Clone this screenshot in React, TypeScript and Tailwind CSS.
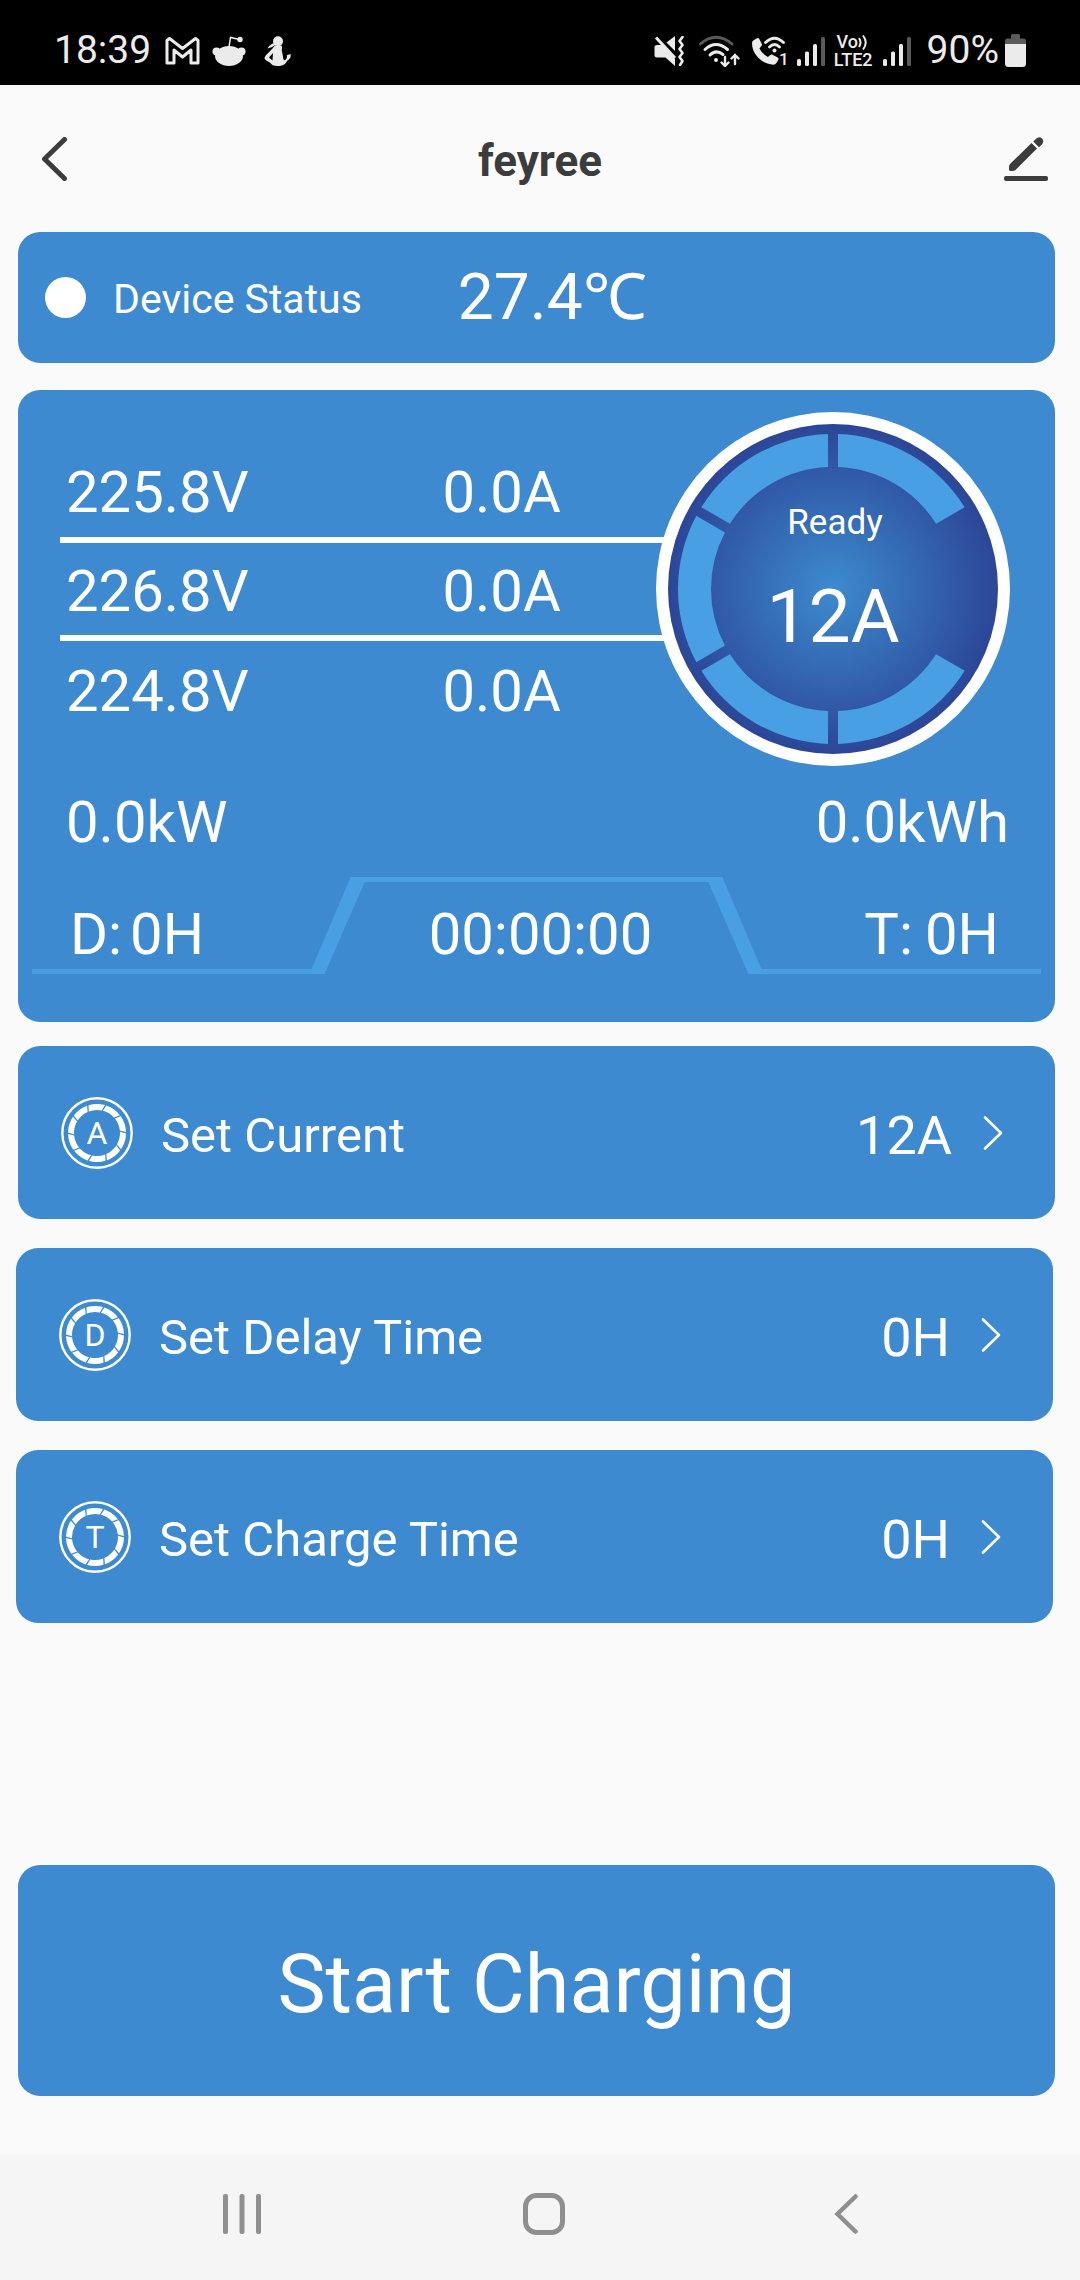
import { useState } from "react";

interface Phase {
  voltage: string;
  current: string;
}

interface Setting {
  letter: string;
  label: string;
  value: string;
}

const phases: Phase[] = [
  { voltage: "225.8V", current: "0.0A" },
  { voltage: "226.8V", current: "0.0A" },
  { voltage: "224.8V", current: "0.0A" },
];

const currentSetting: Setting = { letter: "A", label: "Set Current", value: "12A" };

const timeSettings: Setting[] = [
  { letter: "D", label: "Set Delay Time", value: "0H" },
  { letter: "T", label: "Set Charge Time", value: "0H" },
];

// point on a circle, 0deg is to the right and angles go clockwise
const point = (c: number, r: number, deg: number) => {
  const a = (deg * Math.PI) / 180;
  return `${(c + r * Math.cos(a)).toFixed(2)} ${(c + r * Math.sin(a)).toFixed(2)}`;
};

// dial segment whose sides stay parallel to the gap next to it
const dialSegment = (from: number, to: number) => {
  const outer = 155;
  const inner = 122;
  const gap = 5;
  const o = (Math.asin(gap / outer) * 180) / Math.PI;
  const i = (Math.asin(gap / inner) * 180) / Math.PI;
  return `M${point(178, outer, from + o)} A${outer} ${outer} 0 0 1 ${point(178, outer, to - o)} L${point(178, inner, to - i)} A${inner} ${inner} 0 0 0 ${point(178, inner, from + i)} Z`;
};

// slanted dash of the small setting badge
const badgeDash = (start: number) =>
  `M${point(36, 29, start + 2)} A29 29 0 0 1 ${point(36, 29, start + 35)} L${point(36, 23, start + 31)} A23 23 0 0 0 ${point(36, 23, start - 2)} Z`;

const Signal = () => (
  <svg className="h-8 w-7" viewBox="0 0 28 32" aria-hidden="true">
    <g fill="#ebebeb">
      <rect x="0" y="24" width="4" height="7" rx="1.5" />
      <rect x="8" y="16.5" width="4" height="14.5" rx="1.5" />
      <rect x="16" y="9" width="4" height="22" rx="1.5" />
    </g>
    <rect x="24" y="2" width="4" height="29" rx="1.5" fill="#5a5a5a" />
  </svg>
);

const StatusBar = () => (
  <div className="flex h-[85px] items-center justify-between bg-black pt-4 pr-[54px] pl-[54px] text-[39px] leading-none text-[#ebebeb]">
    <div className="flex items-center">
      <span>18:39</span>
      <svg className="ml-3.5 h-[30px] w-[35px]" viewBox="0 0 35 30" aria-hidden="true">
        <path
          d="M2 27V4.500L4.500 2.500 17.500 12.500 30.500 2.500 33 4.500V27H26V14L17.500 21 9 14V27Z"
          fill="none"
          stroke="#ebebeb"
          strokeWidth="3"
          strokeLinejoin="round"
        />
      </svg>
      <svg className="ml-3 h-[30px] w-[34px]" viewBox="0 0 34 30" aria-hidden="true">
        <g fill="#ebebeb">
          <ellipse cx="17" cy="20" rx="14" ry="10" />
          <circle cx="4.500" cy="15.500" r="4" />
          <circle cx="29.500" cy="15.500" r="4" />
          <circle cx="28" cy="3.500" r="2.700" />
        </g>
        <path d="M17 11l1.500-9.500 8 1.800" fill="none" stroke="#ebebeb" strokeWidth="1.500" />
      </svg>
      <svg className="ml-[18px] h-[30px] w-[27px]" viewBox="0 0 27 30" aria-hidden="true">
        <g fill="#ebebeb">
          <circle cx="14" cy="5.200" r="5" />
          <path d="M11 7C8 7.500 5 9 3.500 12.500 7 11.500 9.500 10.500 12 8.500z" />
          <path
            fillRule="evenodd"
            d="M11 9.500h6.500c1 1.500.3 2.500.3 4.500.2 2.500 1 4 1.200 7 .3 2 .6 3.200 1.500 3.200 1.800-.6 2.800-2.500 2.300-5l3.700-1.200c.7 3-.5 5.500-3.500 7-1 3-4.500 5-9.500 5-4 0-6-1-7.500-3.500C3.500 25.500.5 23.500.5 22c0-2 5-6 8-9.500zM5 21.500l3.500 3 .5-7.500z"
          />
        </g>
      </svg>
    </div>
    <div className="flex items-center">
      <svg className="h-[30px] w-[31px]" viewBox="0 0 31 30" aria-hidden="true">
        <g fill="#ebebeb">
          <path d="M3 9h5l13 14v7l-9.500-8.500H3A2.500 2.500 0 0 1 .5 19v-7.500A2.500 2.500 0 0 1 3 9z" />
          <path d="M21 0v15L12.500 6.500z" />
        </g>
        <path d="M7 3L21 18" stroke="#000" strokeWidth="2.500" />
        <path d="M2 1.500L21 22" stroke="#ebebeb" strokeWidth="3" />
        <path
          d="M28.500 1l-3 4 3 4-3 4 3 4-3 4 3 4-2.500 4"
          fill="none"
          stroke="#ebebeb"
          strokeWidth="2.600"
          strokeLinejoin="round"
          strokeLinecap="round"
        />
      </svg>
      <svg className="ml-3.5 h-8 w-[42px]" viewBox="0 0 42 32" fill="none" strokeLinecap="round" aria-hidden="true">
        <path d="M1.500 9Q17 -4.500 33 9" stroke="#5a5a5a" strokeWidth="2.800" />
        <g stroke="#ebebeb">
          <path d="M6 14.500Q17 4.500 28.500 14.500M11 20Q17 14 24 19.500" strokeWidth="3" />
          <path d="M26 22v9M22.500 27.500l3.500 3.500 3.500-3.500M36 29V20M32.500 23.500L36 20l3.500 3.500" strokeWidth="2.400" />
        </g>
        <circle cx="17" cy="25" r="2" fill="#ebebeb" />
      </svg>
      <svg className="ml-2.5 h-9 w-10" viewBox="0 -2 40 36" fill="none" aria-hidden="true">
        <path
          d="M1 8Q1 6 3 5L6 3.200q1.500-.7 2.300.7l2.500 5q.5 1.200-.4 2.200l-2 2.400q3 5.500 8.500 8.500l2.400-2q1-.8 2.200-.3l5.200 2.700q1.300.9.700 2.300l-2 3.300q-1 1.800-3 1.800Q14 29.500 7 22.500 1 16 1 8z"
          fill="#ebebeb"
        />
        <g stroke="#ebebeb" strokeWidth="2.800" strokeLinecap="round">
          <path d="M14.500 7.500Q23.500-1 32.500 7.500M18.500 12Q23.500 7 28.500 12" />
        </g>
        <circle cx="23.500" cy="15.500" r="2" fill="#ebebeb" />
        <text x="28" y="30" fontSize="17" fontWeight="500" fill="#ebebeb">
          1
        </text>
      </svg>
      <div className="ml-1.5">
        <Signal />
      </div>
      <div className="ml-[9px] flex flex-col text-lg leading-[18px] font-medium">
        <span className="flex items-center justify-center">
          Vo
          <svg className="h-4 w-3" viewBox="0 0 12 16" fill="none" stroke="#ebebeb" strokeWidth="2" aria-hidden="true">
            <path d="M1 4Q4 8.500 1 13M5 1.500Q10.500 8.500 5 15.500" />
          </svg>
        </span>
        <span>LTE2</span>
      </div>
      <div className="ml-2.5">
        <Signal />
      </div>
      <span className="ml-4">90%</span>
      <svg className="ml-1.5 h-[33px] w-[21px]" viewBox="0 0 21 33" aria-hidden="true">
        <path d="M6 1.500Q6 0 7.500 0h6Q15 0 15 1.500V4.500h3.500Q21 4.500 21 7v3H0V7q0-2.500 2.500-2.500H6z" fill="#5a5a5a" />
        <path d="M0 10h21v19.500q0 3.500-3.500 3.500h-14Q0 33 0 29.500z" fill="#ebebeb" />
      </svg>
    </div>
  </div>
);

const Header = () => (
  <header className="grid h-[147px] grid-cols-[1fr_auto_1fr] items-center px-8 text-[#3c3c3c]">
    <button aria-label="Back" className="justify-self-start pl-2">
      <svg className="h-11 w-7" viewBox="0 0 28 44" fill="none" stroke="currentColor" strokeWidth="5">
        <path d="M24.500 2.500L4.500 22l20 19.500" strokeLinecap="round" strokeLinejoin="round" />
      </svg>
    </button>
    <h1 className="pt-1 text-[44px] font-bold">feyree</h1>
    <button aria-label="Edit" className="justify-self-end">
      <svg className="size-11" viewBox="0 0 44 44" fill="currentColor">
        <path d="M27.500 6L33 11.500 12 32.500Q10.500 34 8.500 34H6.500Q5 34 5 32.500V29.500Q5 28 6.500 26.500z" />
        <path d="M29.300 4.500L32 1.700Q35-1.200 38 1.500 40.500 4.500 37.800 7.500L35 10.200z" />
        <rect x="0" y="39" width="44" height="5" rx="2" />
      </svg>
    </button>
  </header>
);

const Dial = () => (
  <div className="relative -ml-3 flex size-[356px] shrink-0 flex-col items-center pt-[92px]">
    <svg className="absolute inset-0 size-full" viewBox="0 0 356 356" aria-hidden="true">
      <defs>
        <radialGradient id="dial">
          <stop offset="0" stopColor="#3d8bcf" />
          <stop offset="1" stopColor="#2c4697" />
        </radialGradient>
      </defs>
      <circle cx="178" cy="178" r="177" fill="#fff" />
      <circle cx="178" cy="178" r="165" fill="url(#dial)" />
      {[30, 90, 150, 210, 270].map((start) => (
        <path key={start} d={dialSegment(start, start + 60)} fill="#489fe4" />
      ))}
    </svg>
    <span className="relative pl-1 text-[35px] leading-10">Ready</span>
    <span className="relative mt-7 text-[75px] leading-[90px]">12A</span>
  </div>
);

const SettingRow = ({ setting }: { setting: Setting }) => (
  <button className="flex h-[173px] w-full items-center rounded-[22px] bg-[#3e8ad0] pr-[52px] pl-[43px] text-left text-white">
    <svg className="size-[72px] shrink-0" viewBox="0 0 72 72" aria-hidden="true">
      <circle cx="36" cy="36" r="34.700" fill="none" stroke="#fff" strokeWidth="2.400" />
      {[0, 1, 2, 3, 4, 5, 6, 7, 8, 9].map((i) => (
        <path key={i} d={badgeDash(i * 36 - 109)} fill="#fff" />
      ))}
      <text x="36" y="47" textAnchor="middle" fontSize="32" fill="#fff">
        {setting.letter}
      </text>
    </svg>
    <span className="ml-7 pt-1.5 text-[49px]">{setting.label}</span>
    <span className="ml-auto pt-1.5 text-[54px] leading-none">{setting.value}</span>
    <svg className="ml-[31px] h-9 w-5 shrink-0" viewBox="0 0 20 36" fill="none" aria-hidden="true">
      <path d="M2 2.500L18 18 2 33.500" stroke="#fff" strokeWidth="2.600" strokeLinecap="round" strokeLinejoin="round" />
    </svg>
  </button>
);

const NavBar = () => (
  <nav className="grid h-[126px] grid-cols-3 items-center justify-items-center bg-[#f5f5f5] pr-[83px] pb-1.5 pl-[91px] text-[#8f8f8f]">
    <button aria-label="Recents">
      <svg className="h-10 w-[38px]" viewBox="0 0 38 40" fill="currentColor">
        <rect x="0" y="0" width="5" height="40" rx="2" />
        <rect x="16.500" y="0" width="5" height="40" rx="2" />
        <rect x="33" y="0" width="5" height="40" rx="2" />
      </svg>
    </button>
    <button aria-label="Home">
      <svg className="size-[42px]" viewBox="0 0 42 42" fill="none" stroke="currentColor" strokeWidth="5">
        <rect x="2.500" y="2.500" width="37" height="37" rx="11" />
      </svg>
    </button>
    <button aria-label="Back">
      <svg className="h-10 w-6" viewBox="0 0 24 40" fill="none" stroke="currentColor" strokeWidth="4.500">
        <path d="M21.500 2.500L3.500 20l18 17.500" strokeLinecap="round" />
      </svg>
    </button>
  </nav>
);

const App = () => {
  const [charging, setCharging] = useState(false);

  return (
    <div className="flex min-h-screen flex-col bg-[#fafafa] font-['Roboto',sans-serif]">
      <StatusBar />
      <Header />

      {/* Device status */}
      <section className="mr-[25px] ml-[18px] flex h-[131px] items-center rounded-[22px] bg-[#3e8ad0] pl-[27px] text-white">
        <span className="size-[41px] rounded-full bg-white" />
        <span className="ml-[27px] pt-1 text-[41px] leading-none">Device Status</span>
        <span className="ml-24 text-[64px] leading-none">27.4℃</span>
      </section>

      {/* Readings */}
      <section className="mt-[27px] mr-[25px] ml-[18px] rounded-[22px] bg-[#3e8ad0] pt-[21px] pb-12 text-[58px] text-white">
        <div className="flex items-center pr-11 pl-[42px]">
          <table className="flex-1 border-collapse leading-none">
            <tbody className="divide-y-6 divide-white">
              {phases.map((phase) => (
                <tr key={phase.voltage} className="h-[98px]">
                  <td className="w-[63%] p-0 pt-1 pl-1.5">{phase.voltage}</td>
                  <td className="p-0 pt-1">{phase.current}</td>
                </tr>
              ))}
            </tbody>
          </table>
          <Dial />
        </div>
        <div className="mt-5 flex justify-between pr-[46px] pl-12 leading-[70px]">
          <span>0.0kW</span>
          <span>0.0kWh</span>
        </div>
        <div className="relative mx-3.5 mt-5 grid h-[97px] grid-cols-3 items-center pt-4 leading-[70px]">
          <svg className="absolute inset-0 size-full" viewBox="0 0 1007 97" preserveAspectRatio="none" aria-hidden="true">
            <path
              d="M0 92H279L318 0H689L728 92H1007V97H715L675 5H332L292 97H0z"
              fill="#489fe4"
            />
          </svg>
          <span className="relative flex gap-2 pl-[38px]">
            <span>D:</span>
            <span>0H</span>
          </span>
          <span className="relative pl-2 text-center">00:00:00</span>
          <span className="relative flex justify-end gap-3 pr-[42px]">
            <span>T:</span>
            <span>0H</span>
          </span>
        </div>
      </section>

      {/* Settings */}
      <div className="mt-6 mr-[25px] ml-[18px]">
        <SettingRow setting={currentSetting} />
      </div>
      <div className="mt-[29px] mr-[27px] ml-4 flex flex-col gap-[29px]">
        {timeSettings.map((setting) => (
          <SettingRow key={setting.label} setting={setting} />
        ))}
      </div>

      <button
        onClick={() => setCharging(!charging)}
        className="mt-auto mr-[25px] mb-[58px] ml-[18px] h-[231px] rounded-[22px] bg-[#3e8ad0] pt-2 text-[81px] text-white"
      >
        {charging ? "Stop Charging" : "Start Charging"}
      </button>

      <NavBar />
    </div>
  );
};

export default App;
